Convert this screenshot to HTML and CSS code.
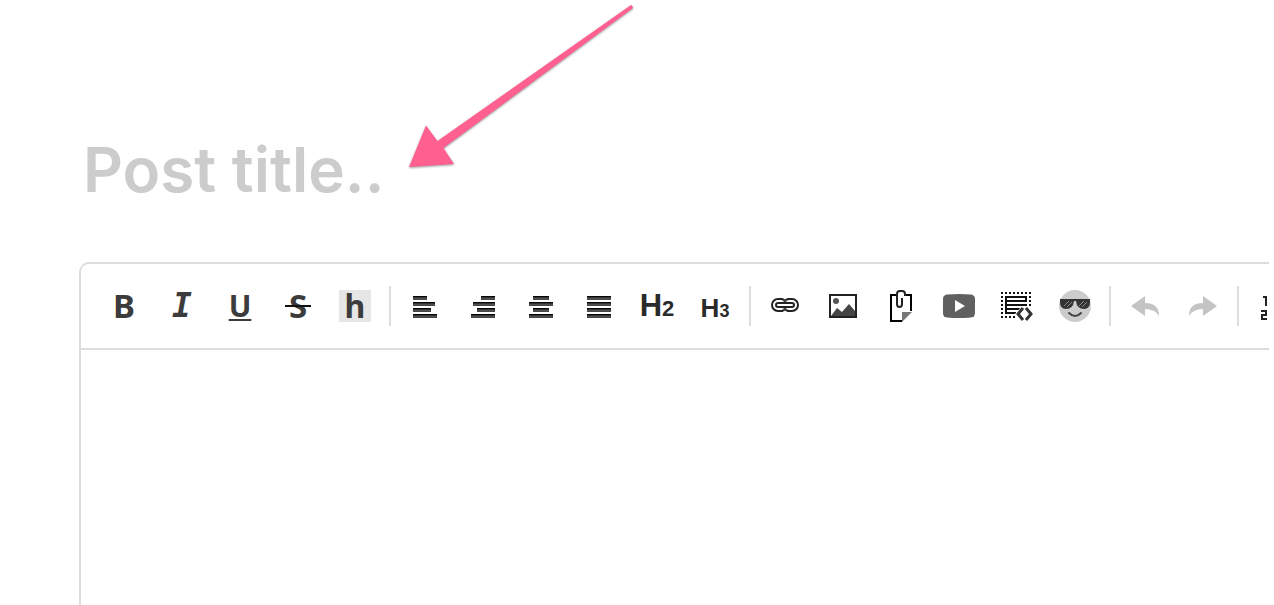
FILE: index.html
```html
<!DOCTYPE html>
<html lang="en">
<head>
    <meta charset="UTF-8">
    <title>New post</title>
    <link rel="stylesheet" href="styles.css">
</head>
<body>

<main class="page">
    <input class="post-title" type="text" placeholder="Post title.." aria-label="Post title">

    <svg class="arrow" width="240" height="176" viewBox="400 0 240 176" aria-hidden="true">
        <path d="M409 167 426 125.500 437.500 141 631 5Q633 6 633 8L443.500 148 454 164Z"/>
    </svg>

    <div class="editor">
        <div class="toolbar" role="toolbar">
            <button type="button" class="letter">B</button>
            <button type="button" class="letter italic">I</button>
            <button type="button" class="letter underline">U</button>
            <button type="button" class="letter strike">S</button>
            <button type="button" class="highlight"><span>h</span></button>
            <span class="divider"></span>

            <button type="button" aria-label="Align left">
                <svg viewBox="0 0 32 32"><path fill="url(#bar)" d="M4 6h14v4H4zM4 12h22v4H4zM4 18h18v4H4zM4 24h24v4H4z"/></svg>
            </button>
            <button type="button" aria-label="Align right">
                <svg viewBox="0 0 32 32"><path fill="url(#bar)" d="M14 6h14v4H14zM6 12h22v4H6zM10 18h18v4H10zM4 24h24v4H4z"/></svg>
            </button>
            <button type="button" aria-label="Align center">
                <svg viewBox="0 0 32 32"><path fill="url(#bar)" d="M8 6h16v4H8zM4 12h24v4H4zM8 18h16v4H8zM4 24h24v4H4z"/></svg>
            </button>
            <button type="button" aria-label="Justify">
                <svg viewBox="0 0 32 32"><path fill="url(#bar)" d="M4 6h24v4H4zM4 12h24v4H4zM4 18h24v4H4zM4 24h24v4H4z"/></svg>
            </button>
            <button type="button" class="heading h2">H<small>2</small></button>
            <button type="button" class="heading h3">H<small>3</small></button>
            <span class="divider"></span>

            <button type="button" aria-label="Link">
                <svg viewBox="0 0 32 32" fill="none" stroke="#222" stroke-width="2">
                    <path d="M15 10 13 9H9a6 6 0 0 0 0 12h4l2-1M17 10l2-1h4a6 6 0 0 1 0 12h-4l-2-1"/>
                    <path d="M16 13H9q-2 0-2 2t2 2h14q2 0 2-2t-2-2z"/>
                    <path stroke="#444" stroke-width="3" d="M16 9v3M16 18v3"/>
                </svg>
            </button>
            <button type="button" aria-label="Image">
                <svg viewBox="0 0 32 32">
                    <path fill="none" stroke="#222" stroke-width="2" d="M3 5h26v22H3z"/>
                    <path fill="#444" d="M4 26 10 18l5 4 7-8 6 7v5z"/>
                    <circle cx="9" cy="11" r="3" fill="#555"/>
                </svg>
            </button>
            <button type="button" aria-label="Attach file">
                <svg viewBox="0 0 32 32">
                    <path fill="none" stroke="#000" stroke-width="2" d="M17 31H6V5h6M20 5h6v16"/>
                    <path fill="#777" d="M17 32V22h10z"/>
                    <path fill="none" stroke="#222" stroke-width="2" d="M20 6V4q0-3-3-3h-2q-3 0-3 3v10q0 3 2.500 3t2.500-3V8"/>
                </svg>
            </button>
            <button type="button" aria-label="Video">
                <svg viewBox="0 0 32 32">
                    <path fill="#606060" d="M4 4.500Q16 3.500 28 4.500 32 5 32 9v14q0 4-4 4.500Q16 28.500 4 27.500 0 27 0 23V9Q0 5 4 4.500z"/>
                    <path fill="#fff" d="M12 10v12l10-6z"/>
                </svg>
            </button>
            <button type="button" aria-label="Embed">
                <svg viewBox="0 0 32 32" fill="none" stroke="#111" stroke-width="2">
                    <path stroke-dasharray="2 2" d="M0 3h31M0 27h15M1 6v20M29 6v10"/>
                    <path d="M4 7h22M4 11h22M4 15h22M4 19h16M4 23h11M5 6v18M25 6v4"/>
                    <path fill="#fff" stroke="none" d="M14 24l7-8h6l6 8-6 8h-6z"/>
                    <path stroke="#333" stroke-width="3" d="m22 18-5 6 5 6M25 18l5 6-5 6"/>
                </svg>
            </button>
            <button type="button" aria-label="Emoji">
                <svg viewBox="0 0 32 32">
                    <circle cx="16" cy="16" r="16" fill="#ccc"/>
                    <path fill="#333" d="M1 9h30v3q0 7-6 7-7 0-8-8h-2q-1 8-8 8-6 0-6-7z"/>
                    <path fill="none" stroke="#888" d="m5 16 5-5M8 17l5-5M20 16l5-5M23 17l5-5"/>
                    <path fill="none" stroke="#444" stroke-width="2" stroke-linecap="round" d="M10 23q6 6 12 0"/>
                </svg>
            </button>
            <span class="divider"></span>

            <button type="button" aria-label="Undo">
                <svg viewBox="0 0 32 32"><path fill="#c4c4c4" d="M2 16 16 6v7q14 0 14 13-4-7-14-7v7z"/></svg>
            </button>
            <button type="button" aria-label="Redo">
                <svg viewBox="0 0 32 32"><path fill="#c4c4c4" d="M30 16 16 6v7Q2 13 2 26q4-7 14-7v7z"/></svg>
            </button>
            <span class="divider"></span>

            <button type="button" aria-label="Numbered list">
                <svg viewBox="0 0 32 32">
                    <path fill="none" stroke="#222" stroke-width="2" d="M6 7h3v9M4 21h5v4H5v4h5"/>
                    <path fill="#333" d="M14 8h16v4H14zM14 22h16v4H14z"/>
                </svg>
            </button>
        </div>
        <div class="content" contenteditable="true" role="textbox" aria-label="Post body"></div>
    </div>
</main>

<svg class="defs" width="0" height="0" aria-hidden="true">
    <linearGradient id="bar" gradientUnits="userSpaceOnUse" x1="0" y1="0" x2="0" y2="6" spreadMethod="repeat">
        <stop offset="0" stop-color="#000"/>
        <stop offset="0.200" stop-color="#111"/>
        <stop offset="0.300" stop-color="#555"/>
        <stop offset="1" stop-color="#333"/>
    </linearGradient>
</svg>

</body>
</html>
```
FILE: styles.css
```css
* {
    box-sizing: border-box;
}
body {
    margin: 0;
    background: #fff;
    font-family: "Noto Sans", sans-serif;
}
.page {
    position: relative;
    display: flex;
    flex-direction: column;
    min-height: 100vh;
    margin-right: 5px;
    padding: 120px 0 0 79px;
    overflow: hidden;
}
.post-title {
    width: 100%;
    height: 96px;
    padding: 2px 0 0 4px;
    border: 0;
    outline: 0;
    font-family: Inter, sans-serif;
    font-size: 62px;
    font-weight: 600;
    color: #333;
}
.post-title::placeholder {
    color: #ccc;
    opacity: 1;
}
.arrow {
    position: absolute;
    top: 0;
    left: 400px;
    fill: #ff6090;
    filter: drop-shadow(0 1px 1px rgba(0, 0, 0, 0.4));
    pointer-events: none;
}
.editor {
    display: flex;
    flex: 1;
    flex-direction: column;
    margin-top: 46px;
    border: 2px solid #ddd;
    border-right: 0;
    border-bottom: 0;
    border-top-left-radius: 10px;
}
.toolbar {
    display: flex;
    align-items: center;
    height: 86px;
    padding: 0 13px;
    border-bottom: 2px solid #ddd;
    overflow: hidden;
}
.toolbar button {
    position: relative;
    display: flex;
    flex: none;
    align-items: center;
    justify-content: center;
    width: 58px;
    height: 58px;
    padding: 0;
    border: 0;
    background: none;
    color: #3c3c3c;
    font-family: "Noto Sans", sans-serif;
    font-size: 32px;
    font-weight: 700;
    line-height: 32px;
    cursor: pointer;
}
.toolbar svg {
    width: 32px;
    height: 32px;
}
.divider {
    flex: none;
    width: 2px;
    height: 40px;
    margin: 0 5px;
    background: #ddd;
}
.toolbar .letter {
    padding-left: 2px;
    font-size: 33px;
}
.toolbar .italic {
    font-family: "DejaVu Sans Mono", monospace;
    font-style: italic;
}
.toolbar .underline {
    text-decoration: underline;
    text-decoration-thickness: 2px;
    text-underline-offset: 2px;
    font-size: 30px;
}
.strike::after {
    content: "";
    position: absolute;
    top: 28px;
    left: 17px;
    width: 26px;
    height: 2px;
    background: #111;
}
.highlight span {
    width: 32px;
    height: 32px;
    background: #e6e6e6;
}
.toolbar .heading {
    align-items: baseline;
    font-family: "Liberation Sans", Arial, sans-serif;
    font-size: 31px;
    line-height: 58px;
    color: #2a2a2a;
}
.toolbar .heading small {
    font-size: 22px;
}
.toolbar .h3 {
    padding-top: 2px;
    font-size: 26px;
}
.toolbar .h3 small {
    font-size: 18px;
}
.content {
    flex: 1;
    padding: 24px;
    outline: 0;
    font-size: 18px;
}
.defs {
    position: absolute;
}
```
